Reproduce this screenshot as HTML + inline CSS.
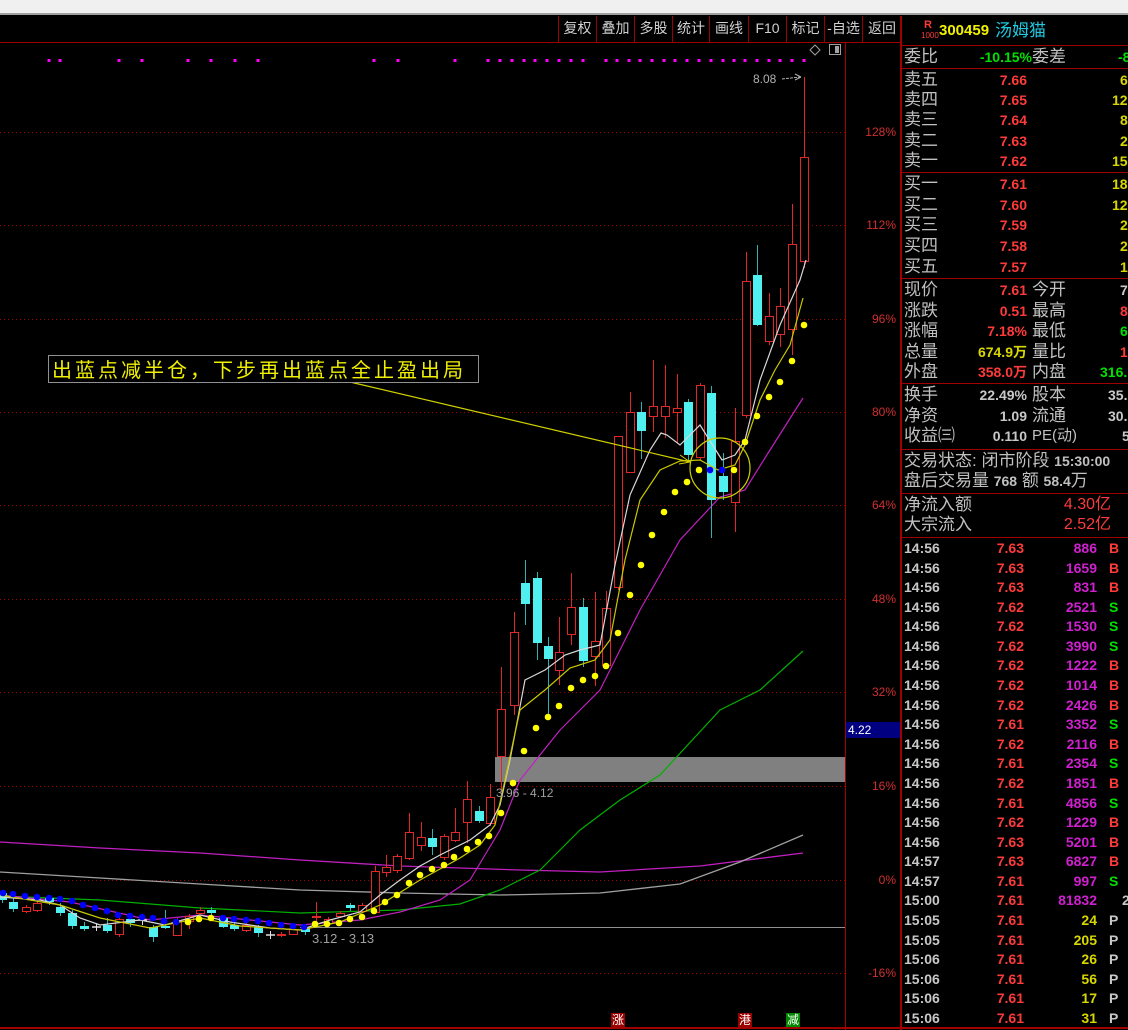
<!DOCTYPE html>
<html><head><meta charset="utf-8">
<style>
*{margin:0;padding:0;box-sizing:border-box}
body{width:1128px;height:1030px;background:#000;overflow:hidden;position:relative;font-family:"Liberation Sans","Noto Sans CJK SC",sans-serif}
.topbar{position:absolute;left:0;top:0;width:1128px;height:15px;background:#f0f0f0;border-bottom:2px solid #a0a0a0}
.tb{position:absolute;top:16px;height:26px;line-height:24px;color:#d0d0d0;font-size:14px;text-align:center;border-left:1px solid #900}
.vline{position:absolute;background:#a00000}
.hsep{position:absolute;left:902px;width:226px;height:1px;background:#a00000}
.r{position:absolute;height:20px;line-height:20px;white-space:nowrap}
.lb{color:#c0c0c0;font-size:17px}
.n{font-size:14px;font-weight:bold;font-family:"Liberation Sans","Noto Sans CJK SC",sans-serif}
.red{color:#ff3a3a}.yel{color:#d8d800}.grn{color:#00e000}.gry{color:#c8c8c8}.mag{color:#d020d0}.cy{color:#20c8e0}
.ax{position:absolute;left:846px;width:50px;text-align:right;font-size:12px;color:#d03030}
.rp{position:absolute;left:902px;top:0;width:226px;height:1030px;overflow:hidden}
</style></head><body>
<div class="topbar"></div>
<div class="tb" style="left:558px;width:38px">复权</div>
<div class="tb" style="left:596px;width:38px">叠加</div>
<div class="tb" style="left:634px;width:38px">多股</div>
<div class="tb" style="left:672px;width:37px">统计</div>
<div class="tb" style="left:709px;width:39px">画线</div>
<div class="tb" style="left:748px;width:38px">F10</div>
<div class="tb" style="left:786px;width:38px">标记</div>
<div class="tb" style="left:824px;width:38px">-自选</div>
<div class="tb" style="left:862px;width:39px">返回</div>
<div class="vline" style="left:0;top:42px;width:901px;height:1px"></div>

<svg id="ch" style="position:absolute;left:0;top:0" width="900" height="1030" xmlns="http://www.w3.org/2000/svg"></svg>

<div style="position:absolute;left:48px;top:355px;width:431px;height:28px;border:1px solid #909090;background:#000;color:#f0f000;font-size:20px;line-height:26px;letter-spacing:3px;padding-left:3px;white-space:nowrap;overflow:hidden;font-family:'Noto Sans CJK SC',sans-serif">出蓝点减半仓，下步再出蓝点全止盈出局</div>
<div style="position:absolute;left:753px;top:72px;font-size:12px;color:#b0b0b0">8.08</div>
<div style="position:absolute;left:496px;top:786px;font-size:12px;color:#a0a0a0">3.96 - 4.12</div>
<div style="position:absolute;left:312px;top:931px;font-size:13px;color:#a0a0a0">3.12 - 3.13</div>

<div class="ax" style="top:125px">128%</div>
<div class="ax" style="top:218px">112%</div>
<div class="ax" style="top:312px">96%</div>
<div class="ax" style="top:405px">80%</div>
<div class="ax" style="top:498px">64%</div>
<div class="ax" style="top:592px">48%</div>
<div class="ax" style="top:685px">32%</div>
<div class="ax" style="top:779px">16%</div>
<div class="ax" style="top:873px">0%</div>
<div class="ax" style="top:966px">-16%</div>
<div style="position:absolute;left:846px;top:722px;width:54px;height:16px;background:#000080;color:#fff;font-size:12px;line-height:16px;padding-left:2px">4.22</div>

<div style="position:absolute;left:611px;top:1013px;width:14px;height:15px;background:#900;color:#fff;font-size:12px;line-height:15px;text-align:center">涨</div>
<div style="position:absolute;left:738px;top:1013px;width:14px;height:15px;background:#900;color:#fff;font-size:12px;line-height:15px;text-align:center">港</div>
<div style="position:absolute;left:786px;top:1013px;width:14px;height:15px;background:#080;color:#fff;font-size:12px;line-height:15px;text-align:center">减</div>

<div class="vline" style="left:845px;top:42px;width:1px;height:988px"></div>
<div class="vline" style="left:900px;top:16px;width:2px;height:1014px"></div>
<div class="vline" style="left:0;top:1027px;width:1128px;height:2px"></div>

<div class="rp">
<div style="position:absolute;left:22px;top:20px;color:#ff3a3a;font-size:11px;font-weight:bold;line-height:11px">R</div>
<div style="position:absolute;left:19px;top:31px;color:#ff3a3a;font-size:8px;line-height:9px">1000</div>
<div style="position:absolute;left:37px;top:20px;color:#f0f000;font-size:15px;font-weight:bold;line-height:22px">300459</div>
<div style="position:absolute;left:93px;top:20px;color:#20c8e0;font-size:17px;line-height:22px">汤姆猫</div>
</div>
<div class="hsep" style="top:45px"></div>
<div class="hsep" style="top:68px"></div>
<div class="hsep" style="top:172px"></div>
<div class="hsep" style="top:278px"></div>
<div class="hsep" style="top:383px"></div>
<div class="hsep" style="top:449px"></div>
<div class="hsep" style="top:493px"></div>
<div class="hsep" style="top:537px"></div>

<div id="rows" style="position:absolute;left:902px;top:0;width:226px;height:1030px;overflow:hidden">
<div class="r lb" style="left:2px;top:47px">委比</div><div class="r n grn" style="right:96px;top:47px">-10.15%</div><div class="r lb" style="left:130px;top:47px">委差</div><div class="r n grn" style="left:216px;top:47px">-8</div>

<div class="r lb" style="left:2px;top:70px">卖五</div><div class="r n red" style="right:101px;top:70px">7.66</div><div class="r n yel" style="left:218px;top:70px">6</div>
<div class="r lb" style="left:2px;top:90px">卖四</div><div class="r n red" style="right:101px;top:90px">7.65</div><div class="r n yel" style="left:210px;top:90px">12</div>
<div class="r lb" style="left:2px;top:110px">卖三</div><div class="r n red" style="right:101px;top:110px">7.64</div><div class="r n yel" style="left:218px;top:110px">8</div>
<div class="r lb" style="left:2px;top:131px">卖二</div><div class="r n red" style="right:101px;top:131px">7.63</div><div class="r n yel" style="left:218px;top:131px">2</div>
<div class="r lb" style="left:2px;top:151px">卖一</div><div class="r n red" style="right:101px;top:151px">7.62</div><div class="r n yel" style="left:210px;top:151px">15</div>

<div class="r lb" style="left:2px;top:174px">买一</div><div class="r n red" style="right:101px;top:174px">7.61</div><div class="r n yel" style="left:210px;top:174px">18</div>
<div class="r lb" style="left:2px;top:195px">买二</div><div class="r n red" style="right:101px;top:195px">7.60</div><div class="r n yel" style="left:210px;top:195px">12</div>
<div class="r lb" style="left:2px;top:215px">买三</div><div class="r n red" style="right:101px;top:215px">7.59</div><div class="r n yel" style="left:218px;top:215px">2</div>
<div class="r lb" style="left:2px;top:236px">买四</div><div class="r n red" style="right:101px;top:236px">7.58</div><div class="r n yel" style="left:218px;top:236px">2</div>
<div class="r lb" style="left:2px;top:257px">买五</div><div class="r n red" style="right:101px;top:257px">7.57</div><div class="r n yel" style="left:218px;top:257px">1</div>

<div class="r lb" style="left:2px;top:280px">现价</div><div class="r n red" style="right:101px;top:280px">7.61</div><div class="r lb" style="left:130px;top:280px">今开</div><div class="r n gry" style="left:218px;top:280px">7</div>
<div class="r lb" style="left:2px;top:301px">涨跌</div><div class="r n red" style="right:101px;top:301px">0.51</div><div class="r lb" style="left:130px;top:301px">最高</div><div class="r n red" style="left:218px;top:301px">8</div>
<div class="r lb" style="left:2px;top:321px">涨幅</div><div class="r n red" style="right:101px;top:321px">7.18%</div><div class="r lb" style="left:130px;top:321px">最低</div><div class="r n grn" style="left:218px;top:321px">6</div>
<div class="r lb" style="left:2px;top:342px">总量</div><div class="r n yel" style="right:101px;top:342px">674.9万</div><div class="r lb" style="left:130px;top:342px">量比</div><div class="r n red" style="left:218px;top:342px">1</div>
<div class="r lb" style="left:2px;top:362px">外盘</div><div class="r n red" style="right:101px;top:362px">358.0万</div><div class="r lb" style="left:130px;top:362px">内盘</div><div class="r n grn" style="left:198px;top:362px">316.</div>

<div class="r lb" style="left:2px;top:385px">换手</div><div class="r n gry" style="right:101px;top:385px">22.49%</div><div class="r lb" style="left:130px;top:385px">股本</div><div class="r n gry" style="left:206px;top:385px">35.</div>
<div class="r lb" style="left:2px;top:406px">净资</div><div class="r n gry" style="right:101px;top:406px">1.09</div><div class="r lb" style="left:130px;top:406px">流通</div><div class="r n gry" style="left:206px;top:406px">30.</div>
<div class="r lb" style="left:2px;top:426px">收益㈢</div><div class="r n gry" style="right:101px;top:426px">0.110</div><div class="r lb" style="left:130px;top:426px;font-size:15px">PE(动)</div><div class="r n gry" style="left:220px;top:426px">5</div>

<div class="r lb" style="left:2px;top:451px">交易状态: 闭市阶段 <span class="n">15:30:00</span></div>
<div class="r lb" style="left:2px;top:471px">盘后交易量 <span class="n">768</span> 额 <span class="n">58.4</span>万</div>

<div class="r lb" style="left:2px;top:495px">净流入额</div><div class="r red" style="right:17px;top:495px;font-size:16px">4.30亿</div>
<div class="r lb" style="left:2px;top:515px">大宗流入</div><div class="r red" style="right:17px;top:515px;font-size:16px">2.52亿</div>
</div>

<div id="tr" style="position:absolute;left:902px;top:539px;width:226px;font-size:14px;font-weight:bold;color:#c8c8c8">
<div class="r" style="position:relative;height:19.58px;line-height:19.58px"><span style="position:absolute;left:2px">14:56</span><span class="red" style="position:absolute;right:104px">7.63</span><span class="mag" style="position:absolute;right:31px">886</span><span class="red" style="position:absolute;left:207px">B</span></div>
<div class="r" style="position:relative;height:19.58px;line-height:19.58px"><span style="position:absolute;left:2px">14:56</span><span class="red" style="position:absolute;right:104px">7.63</span><span class="mag" style="position:absolute;right:31px">1659</span><span class="red" style="position:absolute;left:207px">B</span></div>
<div class="r" style="position:relative;height:19.58px;line-height:19.58px"><span style="position:absolute;left:2px">14:56</span><span class="red" style="position:absolute;right:104px">7.63</span><span class="mag" style="position:absolute;right:31px">831</span><span class="red" style="position:absolute;left:207px">B</span></div>
<div class="r" style="position:relative;height:19.58px;line-height:19.58px"><span style="position:absolute;left:2px">14:56</span><span class="red" style="position:absolute;right:104px">7.62</span><span class="mag" style="position:absolute;right:31px">2521</span><span class="grn" style="position:absolute;left:207px">S</span></div>
<div class="r" style="position:relative;height:19.58px;line-height:19.58px"><span style="position:absolute;left:2px">14:56</span><span class="red" style="position:absolute;right:104px">7.62</span><span class="mag" style="position:absolute;right:31px">1530</span><span class="grn" style="position:absolute;left:207px">S</span></div>
<div class="r" style="position:relative;height:19.58px;line-height:19.58px"><span style="position:absolute;left:2px">14:56</span><span class="red" style="position:absolute;right:104px">7.62</span><span class="mag" style="position:absolute;right:31px">3990</span><span class="grn" style="position:absolute;left:207px">S</span></div>
<div class="r" style="position:relative;height:19.58px;line-height:19.58px"><span style="position:absolute;left:2px">14:56</span><span class="red" style="position:absolute;right:104px">7.62</span><span class="mag" style="position:absolute;right:31px">1222</span><span class="red" style="position:absolute;left:207px">B</span></div>
<div class="r" style="position:relative;height:19.58px;line-height:19.58px"><span style="position:absolute;left:2px">14:56</span><span class="red" style="position:absolute;right:104px">7.62</span><span class="mag" style="position:absolute;right:31px">1014</span><span class="red" style="position:absolute;left:207px">B</span></div>
<div class="r" style="position:relative;height:19.58px;line-height:19.58px"><span style="position:absolute;left:2px">14:56</span><span class="red" style="position:absolute;right:104px">7.62</span><span class="mag" style="position:absolute;right:31px">2426</span><span class="red" style="position:absolute;left:207px">B</span></div>
<div class="r" style="position:relative;height:19.58px;line-height:19.58px"><span style="position:absolute;left:2px">14:56</span><span class="red" style="position:absolute;right:104px">7.61</span><span class="mag" style="position:absolute;right:31px">3352</span><span class="grn" style="position:absolute;left:207px">S</span></div>
<div class="r" style="position:relative;height:19.58px;line-height:19.58px"><span style="position:absolute;left:2px">14:56</span><span class="red" style="position:absolute;right:104px">7.62</span><span class="mag" style="position:absolute;right:31px">2116</span><span class="red" style="position:absolute;left:207px">B</span></div>
<div class="r" style="position:relative;height:19.58px;line-height:19.58px"><span style="position:absolute;left:2px">14:56</span><span class="red" style="position:absolute;right:104px">7.61</span><span class="mag" style="position:absolute;right:31px">2354</span><span class="grn" style="position:absolute;left:207px">S</span></div>
<div class="r" style="position:relative;height:19.58px;line-height:19.58px"><span style="position:absolute;left:2px">14:56</span><span class="red" style="position:absolute;right:104px">7.62</span><span class="mag" style="position:absolute;right:31px">1851</span><span class="red" style="position:absolute;left:207px">B</span></div>
<div class="r" style="position:relative;height:19.58px;line-height:19.58px"><span style="position:absolute;left:2px">14:56</span><span class="red" style="position:absolute;right:104px">7.61</span><span class="mag" style="position:absolute;right:31px">4856</span><span class="grn" style="position:absolute;left:207px">S</span></div>
<div class="r" style="position:relative;height:19.58px;line-height:19.58px"><span style="position:absolute;left:2px">14:56</span><span class="red" style="position:absolute;right:104px">7.62</span><span class="mag" style="position:absolute;right:31px">1229</span><span class="red" style="position:absolute;left:207px">B</span></div>
<div class="r" style="position:relative;height:19.58px;line-height:19.58px"><span style="position:absolute;left:2px">14:56</span><span class="red" style="position:absolute;right:104px">7.63</span><span class="mag" style="position:absolute;right:31px">5201</span><span class="red" style="position:absolute;left:207px">B</span></div>
<div class="r" style="position:relative;height:19.58px;line-height:19.58px"><span style="position:absolute;left:2px">14:57</span><span class="red" style="position:absolute;right:104px">7.63</span><span class="mag" style="position:absolute;right:31px">6827</span><span class="red" style="position:absolute;left:207px">B</span></div>
<div class="r" style="position:relative;height:19.58px;line-height:19.58px"><span style="position:absolute;left:2px">14:57</span><span class="red" style="position:absolute;right:104px">7.61</span><span class="mag" style="position:absolute;right:31px">997</span><span class="grn" style="position:absolute;left:207px">S</span></div>
<div class="r" style="position:relative;height:19.58px;line-height:19.58px"><span style="position:absolute;left:2px">15:00</span><span class="red" style="position:absolute;right:104px">7.61</span><span class="mag" style="position:absolute;right:31px">81832</span><span class="gry" style="position:absolute;left:220px">2</span></div>
<div class="r" style="position:relative;height:19.58px;line-height:19.58px"><span style="position:absolute;left:2px">15:05</span><span class="red" style="position:absolute;right:104px">7.61</span><span class="yel" style="position:absolute;right:31px">24</span><span style="position:absolute;left:207px">P</span></div>
<div class="r" style="position:relative;height:19.58px;line-height:19.58px"><span style="position:absolute;left:2px">15:05</span><span class="red" style="position:absolute;right:104px">7.61</span><span class="yel" style="position:absolute;right:31px">205</span><span style="position:absolute;left:207px">P</span></div>
<div class="r" style="position:relative;height:19.58px;line-height:19.58px"><span style="position:absolute;left:2px">15:06</span><span class="red" style="position:absolute;right:104px">7.61</span><span class="yel" style="position:absolute;right:31px">26</span><span style="position:absolute;left:207px">P</span></div>
<div class="r" style="position:relative;height:19.58px;line-height:19.58px"><span style="position:absolute;left:2px">15:06</span><span class="red" style="position:absolute;right:104px">7.61</span><span class="yel" style="position:absolute;right:31px">56</span><span style="position:absolute;left:207px">P</span></div>
<div class="r" style="position:relative;height:19.58px;line-height:19.58px"><span style="position:absolute;left:2px">15:06</span><span class="red" style="position:absolute;right:104px">7.61</span><span class="yel" style="position:absolute;right:31px">17</span><span style="position:absolute;left:207px">P</span></div>
<div class="r" style="position:relative;height:19.58px;line-height:19.58px"><span style="position:absolute;left:2px">15:06</span><span class="red" style="position:absolute;right:104px">7.61</span><span class="yel" style="position:absolute;right:31px">31</span><span style="position:absolute;left:207px">P</span></div>
</div>

<script>
var s=document.getElementById('ch'),h='';
[132,225,319,412,505,599,692,786,880,973].forEach(function(y){h+='<line x1="0" y1="'+(y+.5)+'" x2="845" y2="'+(y+.5)+'" stroke="#a00000" stroke-dasharray="1,3"/>';});
h+='<rect x="495" y="757" width="350" height="25" fill="#808080"/>';
h+='<line x1="300" y1="927.5" x2="845" y2="927.5" stroke="#909090"/>';
function pl(p,c,w){h+='<polyline fill="none" stroke="'+c+'" stroke-width="'+(w||1)+'" points="'+p+'"/>';}
pl("0,842 100,848 200,853 300,860 400,866 460,868 520,870 600,872 700,866 803,853","#c020c0",1.3);
pl("0,872 100,878 200,884 300,890 400,893 500,895 600,893 680,884 740,862 803,835","#a0a0a0",1.3);
pl("0,896 100,900 200,908 300,913 400,910 460,904 500,890 540,870 580,830 620,800 660,775 720,710 760,690 803,651","#00b000",1.2);
pl("0,895 70,902 150,920 200,915 300,925 360,920 400,912 440,900 470,880 500,830 520,780 560,730 600,690 640,610 680,540 720,497 745,490 770,450 803,398","#c020c0",1.2);
var C=[[-2,893,900,890,903,'c'],[9,902,909,898,912,'c'],[22,907,911,905,913,'r'],[33,903,910,900,912,'r'],[45,898,902,895,905,'c'],[56,907,913,903,916,'c'],[68,913,926,910,929,'c'],[80,926,929,922,931,'c'],[92,927,928,923,931,'w'],[103,925,931,918,933,'c'],[115,919,934,917,937,'r'],[126,919,923,916,927,'c'],[138,920,921,915,925,'w'],[149,927,937,925,942,'c'],[161,926,927,910,929,'c'],[173,921,935,918,936,'r'],[185,916,921,914,929,'r'],[196,910,913,907,914,'r'],[207,910,913,907,916,'c'],[219,918,927,916,928,'c'],[230,925,929,922,931,'c'],[242,925,930,923,932,'r'],[254,927,933,925,937,'c'],[266,935,936,931,939,'w'],[277,934,935,932,937,'r'],[289,929,934,927,935,'r'],[301,928,932,926,935,'c'],[312,916,917,902,923,'r'],[324,919,923,917,925,'r'],[336,913,916,911,918,'r'],[346,905,908,903,911,'c'],[358,905,911,903,913,'r'],[371,871,912,866,913,'r'],[382,867,872,855,877,'r'],[393,856,870,854,873,'r'],[405,832,858,813,860,'r'],[417,837,845,822,851,'r'],[428,838,847,829,855,'c'],[440,836,857,834,860,'r'],[451,832,840,808,842,'r'],[463,799,822,781,843,'r'],[475,811,821,806,823,'c'],[486,797,823,784,826,'r'],[497,709,756,667,790,'r'],[510,632,705,612,715,'r'],[521,583,604,560,625,'c'],[533,578,643,572,660,'c'],[544,646,659,637,718,'c'],[555,652,670,617,685,'r'],[567,607,634,573,645,'r'],[579,607,661,598,667,'c'],[591,641,656,592,686,'r'],[602,608,665,591,668,'r'],[614,436,587,436,590,'r'],[626,412,472,392,473,'r'],[637,412,431,402,459,'c'],[649,406,416,360,432,'r'],[661,406,416,365,438,'r'],[673,408,412,374,443,'r'],[684,402,455,399,460,'c'],[696,385,457,383,460,'r'],[707,393,500,386,538,'c'],[719,476,492,453,500,'c'],[731,441,502,408,532,'r'],[742,281,415,252,418,'r'],[753,275,325,245,326,'c'],[765,316,341,293,345,'r'],[776,306,334,288,347,'r'],[788,244,329,204,355,'r'],[800,157,261,77,268,'r']];
C.forEach(function(c){var x=c[0],m=x+4.5,col=c[5]=='r'?'#e02828':(c[5]=='c'?'#50f0f0':'#e0e0e0');
 var wc=c[5]=='c'?'#30b0b0':col;
 h+='<line x1="'+m+'" y1="'+c[3]+'" x2="'+m+'" y2="'+c[4]+'" stroke="'+wc+'"/>';
 if(c[5]=='w'){h+='<line x1="'+x+'" y1="'+c[1]+'" x2="'+(x+9)+'" y2="'+c[1]+'" stroke="#e0e0e0" stroke-width="1.5"/>';}
 else if(c[5]=='r'){h+='<rect x="'+(x+.5)+'" y="'+(c[1]+.5)+'" width="8" height="'+Math.max(1,c[2]-c[1])+'" fill="#000" stroke="#e02828"/>';}
 else h+='<rect x="'+x+'" y="'+c[1]+'" width="9" height="'+Math.max(2,c[2]-c[1])+'" fill="#50f0f0"/>';});
pl("0,897 40,900 60,905 80,918 100,925 140,920 165,925 200,915 230,922 270,928 300,930 330,920 360,912 380,895 400,880 420,866 440,855 470,840 490,825 500,805 510,760 525,680 545,670 565,655 580,650 600,645 615,565 630,495 650,450 661,433 667,435 680,445 700,425 722,460 735,455 745,440 760,380 780,325 800,280 806,260","#d8d8d8",1.2);
pl("0,895 60,905 100,918 150,928 200,918 240,926 300,930 340,922 380,905 420,880 460,858 480,845 495,825 505,780 520,710 545,690 570,668 595,660 610,640 625,560 640,500 660,470 680,461 700,460 718,470 735,465 745,445 760,400 775,370 790,345 803,298","#c8c800",1.2);
var Y=[[188,922],[199,919],[211,918],[315,924],[327,924],[339,923],[350,919],[362,917],[374,911],[385,902],[397,895],[409,883],[420,875],[432,869],[444,865],[454,857],[467,849],[478,842],[489,836],[501,813],[513,783],[524,751],[536,728],[548,717],[559,706],[571,688],[583,680],[595,676],[606,666],[618,633],[630,595],[641,565],[652,535],[664,512],[675,492],[687,482],[699,470],[734,470],[745,442],[757,416],[769,397],[780,382],[792,361],[804,325]];
Y.forEach(function(p){h+='<circle cx="'+p[0]+'" cy="'+p[1]+'" r="3.3" fill="#ffff00"/>';});
var B=[[3,893],[13,894],[25,896],[37,897],[49,898],[60,899],[72,901],[83,905],[95,908],[107,911],[118,915],[130,916],[142,917],[153,918],[164,921],[176,922],[223,918],[234,919],[246,920],[258,921],[269,923],[281,925],[293,926],[304,927],[710,470],[722,470]];
B.forEach(function(p){h+='<circle cx="'+p[0]+'" cy="'+p[1]+'" r="3.3" fill="#0000ff"/>';});
[49,60,119,142,188,211,235,258,374,398,455,488,500,512,524,535,547,559,571,583,606,617,629,640,652,664,675,687,699,711,723,734,745,757,769,780,792,804].forEach(function(x){h+='<rect x="'+(x-1.5)+'" y="59" width="3" height="3" fill="#ff00ff"/>';});
h+='<circle cx="720" cy="468" r="30" fill="none" stroke="#d0d000" stroke-width="1.2"/>';
h+='<line x1="350" y1="382" x2="690" y2="462" stroke="#d0d000" stroke-width="1.2"/><polyline points="680,455 690,462 679,464" fill="none" stroke="#d0d000"/>';
h+='<line x1="782" y1="79" x2="800" y2="77" stroke="#b0b0b0" stroke-dasharray="3,1"/><line x1="795" y1="74" x2="801" y2="77" stroke="#b0b0b0"/><line x1="795" y1="80" x2="801" y2="77" stroke="#b0b0b0"/>';
h+='<path d="M815 45 L820 50 L815 55 L810 50 Z" fill="none" stroke="#a0a0a0"/>';
h+='<rect x="829.5" y="44.5" width="11" height="10" fill="none" stroke="#a0a0a0"/><rect x="835" y="46" width="4" height="7" fill="#a0a0a0"/>';
s.innerHTML=h;
</script>
</body></html>
